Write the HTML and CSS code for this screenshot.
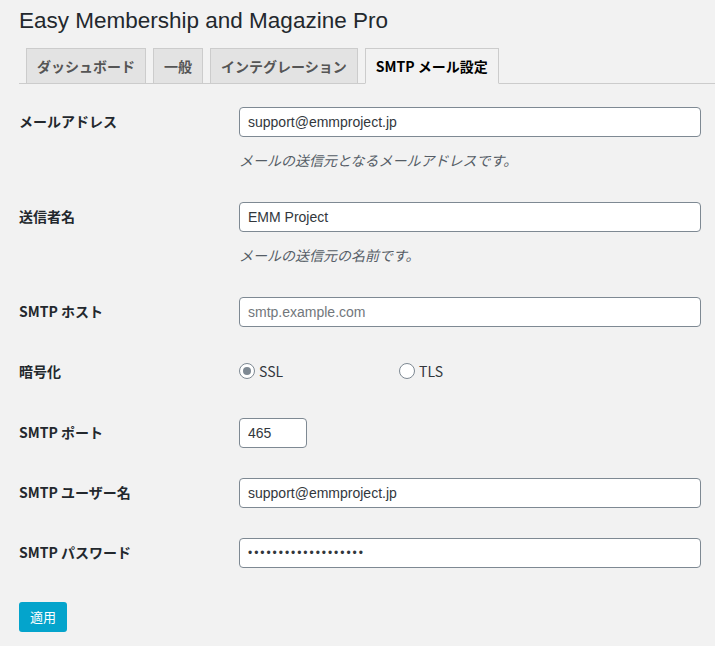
FILE: index.html
```html
<!DOCTYPE html>
<html lang="ja">
<head>
<meta charset="utf-8">
<title>Easy Membership and Magazine Pro</title>
<link rel="stylesheet" href="styles.css">
</head>
<body>
<div class="wrap">
  <h1 class="title">Easy Membership and Magazine Pro</h1>
  <nav class="tabs">
    <a class="tab">ダッシュボード</a>
    <a class="tab">一般</a>
    <a class="tab">インテグレーション</a>
    <a class="tab tab-active">SMTP メール設定</a>
  </nav>
  <form class="form">
    <div class="row">
      <div class="label">メールアドレス</div>
      <div class="field">
        <input class="input" type="text" value="support@emmproject.jp">
        <p class="desc">メールの送信元となるメールアドレスです。</p>
      </div>
    </div>
    <div class="row">
      <div class="label">送信者名</div>
      <div class="field">
        <input class="input" type="text" value="EMM Project">
        <p class="desc">メールの送信元の名前です。</p>
      </div>
    </div>
    <div class="row">
      <div class="label">SMTP ホスト</div>
      <div class="field">
        <input class="input" type="text" placeholder="smtp.example.com">
      </div>
    </div>
    <div class="row">
      <div class="label">暗号化</div>
      <div class="field field-radio">
        <label class="radio radio-first"><span class="radio-dot radio-checked"></span>SSL</label>
        <label class="radio"><span class="radio-dot"></span>TLS</label>
      </div>
    </div>
    <div class="row">
      <div class="label">SMTP ポート</div>
      <div class="field">
        <input class="input input-small" type="text" value="465">
      </div>
    </div>
    <div class="row">
      <div class="label">SMTP ユーザー名</div>
      <div class="field">
        <input class="input" type="text" value="support@emmproject.jp">
      </div>
    </div>
    <div class="row">
      <div class="label">SMTP パスワード</div>
      <div class="field">
        <input class="input input-pass" type="password" value="abcdefghijklmnopqrs">
      </div>
    </div>
    <div class="submit">
      <button class="button" type="button">適用</button>
    </div>
  </form>
</div>
</body>
</html>
```
FILE: styles.css
```css
html, body {
  margin: 0;
  background: #f2f2f2;
}
body {
  font-family: "Noto Sans CJK JP", sans-serif;
  font-size: 14px;
  color: #23282d;
}
.wrap {
  padding-left: 19px;
}
.title {
  margin: 0;
  padding: 6px 0 4px;
  font-family: "Liberation Sans", "Noto Sans CJK JP", sans-serif;
  font-size: 22.5px;
  font-weight: 400;
  line-height: 30px;
  color: #23282d;
}
.tabs {
  display: flex;
  gap: 7px;
  margin-top: 8px;
  padding-left: 7px;
  border-bottom: 1px solid #ccc;
}
.tab {
  display: block;
  padding: 5px 10px;
  margin-bottom: -1px;
  border: 1px solid #ccc;
  background: #e3e3e3;
  color: #555;
  font-weight: 700;
  font-size: 14px;
  line-height: 24px;
  white-space: nowrap;
}
.tab-active {
  background: #f2f2f2;
  border-bottom-color: #f2f2f2;
  color: #000;
}
.form {
  margin-top: 8px;
}
.row {
  display: flex;
}
.label {
  width: 200px;
  padding: 20px 10px 0 0;
  font-weight: 700;
  line-height: 18px;
  flex: none;
}
.field {
  padding: 15px 10px 15px;
}
.input {
  display: block;
  box-sizing: border-box;
  width: 462px;
  height: 30px;
  margin: 0;
  padding: 0 8px;
  border: 1px solid #7e8993;
  border-radius: 4px;
  background: #fff;
  font-family: "Liberation Sans", "Noto Sans CJK JP", sans-serif;
  font-size: 14px;
  color: #32373c;
  outline: none;
}
.input::placeholder {
  color: #72777c;
}
.input-small {
  width: 68px;
}
.input-pass {
  font-size: 12px;
  letter-spacing: 1.95px;
}
.desc {
  margin: 13px 0 2px;
  line-height: 20px;
  font-style: italic;
  color: #555d66;
}
.field-radio {
  display: flex;
  align-items: center;
  padding: 20px 10px 23px;
  height: 18px;
}
.radio {
  display: flex;
  align-items: center;
  gap: 4px;
  color: #32373c;
  line-height: 18px;
}
.radio-first {
  width: 160px;
}
.radio-dot {
  box-sizing: border-box;
  width: 16px;
  height: 16px;
  border: 1px solid #7e8993;
  border-radius: 50%;
  background: #fff;
  display: flex;
  align-items: center;
  justify-content: center;
}
.radio-checked::after {
  content: "";
  width: 8px;
  height: 8px;
  border-radius: 50%;
  background: #7e8993;
}
.submit {
  margin-top: 19px;
}
.button {
  width: 48px;
  height: 30px;
  padding: 0;
  border: 0;
  border-radius: 3px;
  background: #04a4cc;
  color: #fff;
  font-family: "Noto Sans CJK JP", sans-serif;
  font-size: 13px;
  line-height: 30px;
}
```
